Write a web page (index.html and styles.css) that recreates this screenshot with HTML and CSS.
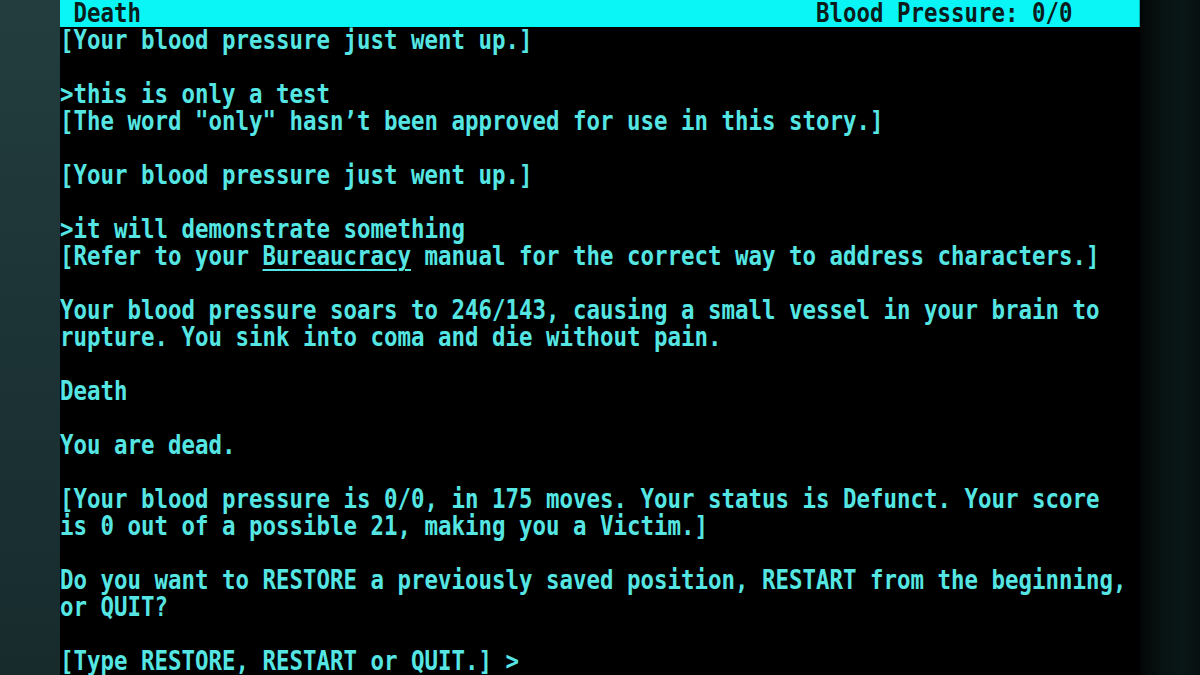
FILE: index.html
```html
<!DOCTYPE html>
<html lang="en">
<head>
<meta charset="utf-8">
<title>Death</title>
<link rel="stylesheet" href="styles.css">
</head>
<body>
<div class="frame">
  <div class="bezel bezel-left"></div>
  <main class="screen">
    <div class="term">
      <header class="status">
        <span class="status-room">Death</span>
        <span class="status-score">Blood Pressure: 0/0</span>
      </header>
<pre class="output">[Your blood pressure just went up.]

&gt;this is only a test
[The word "only" hasn’t been approved for use in this story.]

[Your blood pressure just went up.]

&gt;it will demonstrate something
[Refer to your <span class="ul">Bureaucracy</span> manual for the correct way to address characters.]

Your blood pressure soars to 246/143, causing a small vessel in your brain to
rupture. You sink into coma and die without pain.

Death

You are dead.

[Your blood pressure is 0/0, in 175 moves. Your status is Defunct. Your score
is 0 out of a possible 21, making you a Victim.]

Do you want to RESTORE a previously saved position, RESTART from the beginning,
or QUIT?

[Type RESTORE, RESTART or QUIT.] &gt;</pre>
    </div>
  </main>
  <div class="bezel bezel-right"></div>
</div>
</body>
</html>
```
FILE: styles.css
```css
html, body {
  margin: 0;
  padding: 0;
  background: #000;
}

.frame {
  display: flex;
  width: 1200px;
  height: 675px;
  overflow: hidden;
}

.bezel {
  flex: 0 0 60px;
  height: 100%;
}

.bezel-left {
  background: linear-gradient(180deg, #233d3f 0%, #1d3436 45%, #172b2d 100%);
}

.bezel-right {
  background: linear-gradient(90deg, #030606 0%, #081313 40%, #0a1717 70%, #071010 100%);
}

.screen {
  flex: 0 0 1080px;
  height: 100%;
  background: #000;
  overflow: hidden;
}

.term {
  width: 80ch;
  font-family: "DejaVu Sans Mono", "Liberation Mono", monospace;
  font-size: 26px;
  font-weight: bold;
  line-height: 27px;
  transform: scaleX(0.8624);
  transform-origin: 0 0;
}

.status {
  display: flex;
  justify-content: space-between;
  height: 27px;
  padding: 0 5ch 0 1ch;
  background: #0af6f6;
  color: #0a1c1c;
  white-space: pre;
}

.output {
  margin: 0;
  font: inherit;
  line-height: 27px;
  color: #55e6e4;
  white-space: pre;
}

.ul {
  text-decoration: underline;
  text-decoration-thickness: 2px;
  text-underline-offset: 4px;
}
```
